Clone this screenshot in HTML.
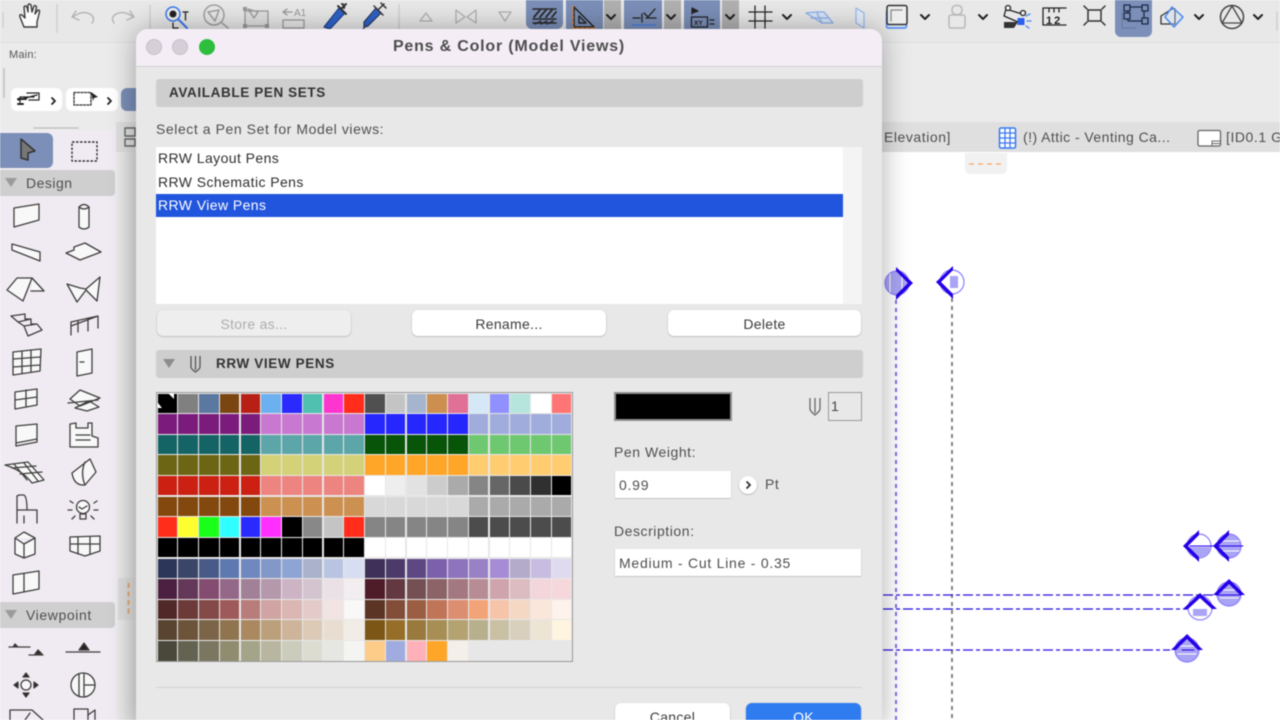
<!DOCTYPE html>
<html><head><meta charset="utf-8">
<style>
html,body{margin:0;padding:0;width:1280px;height:720px;overflow:hidden;background:#fff}
#r{position:relative;width:1280px;height:720px;overflow:hidden;font-family:"Liberation Sans",Arial,sans-serif;filter:blur(.45px);background:#fff}
#r div,#r span.a{position:absolute}
.t{white-space:nowrap;color:#4f4f4f;font-size:14px;letter-spacing:.55px;line-height:16px}
.h{white-space:nowrap;color:#333;font-weight:bold;font-size:13.5px;letter-spacing:.62px;line-height:16px}
.btn{background:#fff;border-radius:6px;box-shadow:0 .5px 1.5px rgba(0,0,0,.3);text-align:center;font-size:14px;color:#3c3c3c;line-height:28px;letter-spacing:.3px}
.inp{background:#fff;box-shadow:0 .5px 1px rgba(0,0,0,.3);font-size:14px;color:#4f4f4f;line-height:28px;padding-left:4px;box-sizing:border-box;letter-spacing:.75px;white-space:nowrap}
#g{left:156px;top:392px;width:417px;height:270px;box-sizing:border-box;border:1px solid #999;background:#e7e7e7;display:grid;grid-template-columns:repeat(20,1fr);grid-template-rows:repeat(13,1fr);gap:1.2px;padding:.5px}
#g i{display:block}
svg{position:absolute;left:0;top:0}
</style></head><body><div id="r">

<!-- app chrome -->
<div style="left:0;top:0;width:1280px;height:42px;background:#e8e8e8"></div>
<div style="left:0;top:42px;width:1280px;height:80px;background:#ebebeb;border-top:1px solid #e0e0e0"></div>
<div style="left:0;top:122px;width:1280px;height:30px;background:#dfdfdf"></div>
<div style="left:0;top:122px;width:116px;height:10px;background:#ebebeb"></div>
<div style="left:0;top:130px;width:116px;height:590px;background:#f0ebf2"></div>
<div style="left:116px;top:122px;width:20px;height:598px;background:linear-gradient(90deg,#ececec,#dedede)"></div>
<div style="left:118px;top:578px;width:18px;height:42px;background:#dcdcdc"></div>
<div style="left:116px;top:122px;width:20px;height:30px;background:#dedede"></div>

<div class="t" style="left:9px;top:47px;font-size:11px;letter-spacing:.2px;color:#555">Main:</div>
<div style="left:3px;top:68px;width:2px;height:30px;background:#c8c8c8"></div>
<div style="left:11px;top:88px;width:51px;height:23px;background:#fff;border-radius:6px"></div>
<div style="left:66px;top:88px;width:52px;height:23px;background:#fff;border-radius:6px"></div>
<div style="left:121px;top:88px;width:20px;height:23px;background:#7b8fb8;border-radius:6px"></div>

<!-- blue toolbar buttons -->
<div style="left:526px;top:0;width:37px;height:29px;background:#7b8fb8;border-radius:0 0 6px 6px"></div>
<div style="left:566px;top:0;width:37px;height:29px;background:#7b8fb8"></div>
<div style="left:604px;top:0;width:17px;height:29px;background:#b0b0b0"></div>
<div style="left:624px;top:0;width:38px;height:29px;background:#7b8fb8"></div>
<div style="left:664px;top:0;width:17px;height:29px;background:#b0b0b0"></div>
<div style="left:684px;top:0;width:36px;height:29px;background:#7b8fb8"></div>
<div style="left:722px;top:0;width:17px;height:29px;background:#b0b0b0"></div>
<div style="left:1115px;top:0;width:37px;height:37px;background:#7b8fb8;border-radius:0 0 6px 6px"></div>
<div style="left:0;top:133px;width:53px;height:35px;background:#7b8fb8;border-radius:0 6px 6px 0"></div>
<div style="left:0;top:170px;width:115px;height:26px;background:#cfcfcf;border-radius:0 4px 4px 0"></div>
<div style="left:0;top:602px;width:115px;height:26px;background:#cfcfcf;border-radius:0 4px 4px 0"></div>
<div class="t" style="left:26px;top:175px;font-size:14px;letter-spacing:.5px">Design</div>
<div class="t" style="left:26px;top:607px;font-size:14px;letter-spacing:.6px">Viewpoint</div>

<!-- tabs -->
<div class="t" style="left:884px;top:129px">Elevation]</div>
<div class="t" style="left:1023px;top:129px;letter-spacing:.45px">(!) Attic - Venting Ca...</div>
<div class="t" style="left:1226px;top:129px">[ID0.1 GI</div>
<div style="left:965px;top:153px;width:42px;height:21px;background:#f1f1f1;border-radius:0 0 5px 5px"></div>

<svg width="1280" height="720" viewBox="0 0 1280 720" fill="none" stroke="#444" stroke-width="1.3" stroke-linejoin="round" stroke-linecap="round">
<!-- canvas markers -->
<g stroke-width="1.8" stroke-linecap="butt">
<path d="M896 300V720" stroke="#7a5fe6" stroke-dasharray="4 4"/>
<path d="M952 298V720" stroke="#777" stroke-dasharray="4 4"/>
<path d="M883 595H1215" stroke="#2a10e0" stroke-width="1.2" stroke-dasharray="10 3 4 3"/>
<path d="M883 609H1190" stroke="#2010e0" stroke-width="1.2" stroke-dasharray="10 3 4 3"/>
<path d="M883 650H1170" stroke="#2a10e0" stroke-width="1.2" stroke-dasharray="10 3 4 3"/>
</g>
<g stroke="#8a80ff" stroke-width="1.2">
<circle cx="897" cy="283" r="12" fill="#a9a4f4"/>
<circle cx="952" cy="282" r="12" fill="#fff"/>
<path d="M950 276h8v12h-8z" fill="#a9a4f4" stroke="none"/>
<circle cx="1199" cy="546" r="12" fill="#fff"/><path d="M1188 547h22a11 11 0 0 1-22 0z" fill="#a9a4f4" stroke="none"/>
<circle cx="1229" cy="546" r="12" fill="#a9a4f4"/>
<circle cx="1229" cy="594" r="12" fill="#a9a4f4"/>
<circle cx="1200" cy="608" r="12" fill="#fff"/><path d="M1193 609h14v7h-14z" fill="#a9a4f4" stroke="none"/>
<circle cx="1187" cy="650" r="12" fill="#a9a4f4"/>
</g>
<g stroke="#fff" stroke-width="1"><path d="M1220 590H1238M1220 598H1238M1178 646H1196M1178 654H1196M1219 541H1239M890 274V292M902 274V292M1220 551H1239"/></g>
<g fill="#2500e8" stroke="none">
<path d="M896 267L913 283L896 300L896 295L908 283L896 271z"/>
<path d="M953 266L936 282L953 299L953 294L941 282L953 270z"/>
<path d="M1199 530L1183 546L1199 562L1199 557L1188 546L1199 535z"/><path d="M1229 530L1213 546L1229 562L1229 557L1218 546L1229 535z"/>
<path d="M1229 579L1245 595H1240L1229 584L1218 595H1213z"/><path d="M1200 593L1217 609H1212L1200 598L1188 609H1183z"/><path d="M1187 634L1203 650H1198L1187 639L1176 650H1171z"/>
</g>
<path d="M1190 546H1243M1216 595H1241M1182 650H1194" stroke="#2500e8" stroke-width="1"/>

<!-- orange dashes -->
<path d="M969 164H1003" stroke="#f2a868" stroke-width="1.3" stroke-dasharray="5 4" stroke-linecap="butt"/>
<path d="M128.500 583V617" stroke="#e8a870" stroke-width="2" stroke-dasharray="5 3.500" stroke-linecap="butt"/>

<!-- tab icons -->
<rect x="999.500" y="128" width="16" height="20" rx="1.500" fill="#fff" stroke="#3a78f0" stroke-width="1.500"/>
<path d="M1005 128V148M1010 128V148M1000 133H1015M1000 138H1015M1000 143H1015" stroke="#3a78f0" stroke-width="1.300"/>
<rect x="1198" y="130.500" width="22.500" height="15.500" rx="1.500" fill="#fff" stroke="#666" stroke-width="1.300"/>
<path d="M1212 146V141H1220M1213 143.500H1220" stroke="#666" stroke-width="1"/>
<path d="M125 128H135V136H125zM125 139H135V146H125z" stroke="#666" stroke-width="1.400"/>
<path d="M34 128H78" stroke="#bbb"/>

<!-- toolbar separators -->
<path d="M3 13V27M57 5V32M150 5V32M399 5V32M1277 12V30" stroke="#d0d0d0" stroke-width="1.500"/>
<!-- hand -->
<path d="M24 27L20 17Q19 14 22 15L25 18L24 7Q25 5 27 7L28 12V5Q29 3 31 5L32 12L34 6Q36 5 36.500 7L35 14L38 10Q40 10 39.500 12L37 22L37 27z" stroke="#3a3a3a" fill="#fbfbfb" stroke-width="1.400"/>
<!-- undo redo -->
<path d="M76 11L72 17L79 20M73 17Q82 10 90 14Q96 18 92 23" stroke="#b4b4b4" stroke-width="1.400"/>
<path d="M130 11L134 17L127 20M133 17Q124 10 116 14Q110 18 114 23" stroke="#b4b4b4" stroke-width="1.400"/>
<!-- find & select -->
<circle cx="173" cy="14" r="7" stroke="#3a78f0" stroke-width="1.500" fill="#eee"/><circle cx="173" cy="14" r="3.500" fill="#222" stroke="none"/>
<path d="M178 19L187 28" stroke="#3a78f0" stroke-width="2"/>
<path d="M183 12H188M185.500 12V20M173 23V28H178" stroke="#222"/>
<circle cx="214" cy="15" r="10" stroke="#a0a0a0" stroke-width="1.500"/><path d="M208 12L219 10L215 21zM222 23L228 28" stroke="#a0a0a0" stroke-width="1.500"/>
<path d="M245 26V11H268V26zM248 9L258 12L254 18z" stroke="#9a9a9a" stroke-width="1.300" fill="#e0e0e0"/>
<rect x="243" y="7" width="4" height="4" fill="#999" stroke="none"/><rect x="265" y="24" width="4" height="4" fill="#999" stroke="none"/><rect x="243" y="24" width="4" height="4" fill="#999" stroke="none"/>
<path d="M283 20H304V28H283zM283 12L287 9M283 12L287 15M283 12H292" stroke="#9a9a9a" stroke-width="1.300"/>
<text x="294" y="16" font-family="Liberation Sans" font-size="10" fill="#999" stroke="none">A1</text>
<!-- eyedropper -->
<path d="M324 27L330 29L345 13L339 8z" fill="#2f62c8" stroke="#1e3f88" stroke-width="1.200"/><path d="M338 6L346 14M342 4Q345 5 344 8M342 8L346 4" stroke="#333" stroke-width="2"/>
<path d="M364 27L368 26L381 13L376 8L364 22zM363 29L366 26" fill="#2f62c8" stroke="#2a3a60" stroke-width="1.200"/><path d="M374 6L383 15M379 9L384 4M381 3L386 8" stroke="#333" stroke-width="1.500"/>
<!-- triangles -->
<path d="M420 21H432L426 13z" stroke="#b0b0b0" stroke-width="1.300"/>
<path d="M456 10V23L465 17zM476 10V23L467 17z" stroke="#b0b0b0" stroke-width="1.300"/>
<path d="M499 12H511L505 21z" stroke="#b0b0b0" stroke-width="1.300"/>
<!-- layer hatch -->
<path d="M533 9H556M533 19H556M533 23H556" stroke="#2a2a2a" stroke-width="1.500"/>
<path d="M534 17L540 10M540 17L546 10M546 17L552 10M552 17L556 12" stroke="#2a2a2a" stroke-width="1.800"/>
<path d="M535 24L541 21M541 24L547 21M547 24L553 21" stroke="#2a2a2a" stroke-width="1.300"/>
<!-- ruler triangle -->
<path d="M574 7L594 27H574zM579 16L586 23H579z" stroke="#222" stroke-width="1.400"/>
<path d="M573 6V28H596" stroke="#e8822c" stroke-width="1.300" stroke-dasharray="3 2"/>
<path d="M607 15L611 19L615 15M667 15L671 19L675 15M726 15L730 19L734 15M783 15L787 19L791 15" stroke="#222" stroke-width="2"/>
<path d="M633 18H640M646 18H656M642 14V22M644 13L648 17L655 9" stroke="#222" stroke-width="1.300"/>
<path d="M633 25H655" stroke="#3a78f0" stroke-width="1.200" stroke-dasharray="2.500 1.500"/>
<path d="M692 8V14M692 8L698 11L692 13" stroke="#222" fill="#222" stroke-width="1.200"/>
<rect x="691.500" y="17" width="16" height="10" stroke="#222" stroke-width="1.300"/>
<path d="M710 20H714M710 24H714" stroke="#222" stroke-width="1.200"/>
<text x="694" y="25" font-family="Liberation Sans" font-size="6.500" font-weight="bold" fill="#222" stroke="none">XY</text>
<!-- grid snap -->
<path d="M749 12H772M749 21H772M755 6V28M765 6V28" stroke="#222" stroke-width="1.300" stroke-dasharray="4 1"/>
<path d="M816 12H824L833 23H822L806 13z" stroke="#8ab0ee" fill="#d8e4f6" stroke-width="1.300"/><path d="M811 18H828M817 13L822 23" stroke="#8ab0ee"/>
<path d="M856 8L864 13V28L856 23z" stroke="#9ab8ee" stroke-width="1.200" fill="#e4ecf8"/>
<!-- right toolbar -->
<rect x="886.500" y="10" width="20" height="18" rx="2" stroke="#4a88ee" stroke-width="1.500" fill="#d8e4f6"/>
<rect x="887" y="5.500" width="20" height="19" rx="2" stroke="#333" stroke-width="1.500" fill="#eee"/><path d="M891 21V10H902" stroke="#888"/>
<path d="M921 15L925 19L929 15M979 15L983 19L987 15M1195 15L1199 19L1203 15M1254 15L1258 19L1262 15" stroke="#222" stroke-width="2"/>
<rect x="949" y="15" width="16" height="13" rx="2" stroke="#b8b8b8" stroke-width="1.500"/><rect x="952" y="5.500" width="10" height="9" rx="4" stroke="#b8b8b8" stroke-width="1.500"/>
<path d="M1006 9L1022 14M1006 9L1004 16L1018 22" stroke="#222" stroke-width="1.300"/><circle cx="1008" cy="8" r="2.500" fill="#eee" stroke="#222"/><circle cx="1023" cy="13" r="2.500" fill="#eee" stroke="#222"/>
<path d="M1004 22H1018L1014 28H1004z" fill="#333" stroke="none"/><rect x="1017.500" y="18" width="7" height="7" fill="#2a5ff0" stroke="none"/><path d="M1026 16L1030 14M1027 21H1031M1026 26L1029 28" stroke="#4a88ee"/>
<path d="M1043 8H1066M1043 25H1066M1043 8V25M1049 8V12M1054 8V12M1059 8V12" stroke="#222" stroke-width="1.300"/>
<text x="1046" y="24" font-family="Liberation Sans" font-size="11" font-weight="bold" letter-spacing="2" fill="#222" stroke="none">12</text>
<path d="M1088 10L1101 10L1101 21L1088 21zM1087 9L1084 6M1102 9L1105 6M1087 22L1084 25M1102 22L1105 25" stroke="#333" stroke-width="1.500"/>
<rect x="1128" y="7" width="16" height="14" stroke="#1e2a44" stroke-width="1.300"/>
<path d="M1124 13H1130V19H1124zM1142 5H1148V11H1142zM1124 5H1130V11H1124zM1142 18H1148V24H1142z" fill="#7b8fb8" stroke="#1e2a44" stroke-width="1.300"/>
<path d="M1122 12V28H1136" stroke="#69789a" stroke-width="1"/>
<path d="M1161 24V16L1172 9H1175V24z" stroke="#333" stroke-width="1.300"/>
<path d="M1172 7L1183 17L1174 27L1165 17z" stroke="#4a88ee" stroke-width="1.500" fill="rgba(200,220,250,.35)"/>
<circle cx="1232" cy="17" r="11.500" stroke="#444" stroke-width="1.500"/><path d="M1232 6L1242 23H1222z" stroke="#444" stroke-width="1.300"/>

<!-- pills -->
<path d="M18 100L37 95M20 97H35M20 97V104M27 93H39V100H29" stroke="#222" stroke-width="1.300" stroke-dasharray="2 1"/><path d="M18 99H26M18 104H23" stroke="#222" stroke-width="2"/>
<path d="M52 98L55 101L52 104M108 98L111 101L108 104" stroke="#222" stroke-width="1.800"/>
<rect x="74" y="92.500" width="17" height="12.500" stroke="#333" stroke-dasharray="2 1.500"/><path d="M91 92L98 97L94 98L93 101z" fill="#222" stroke="none"/>

<!-- select tool & marquee -->
<path d="M21 139L35 151L28 153L28 160L21 158z" fill="#777" stroke="#333" stroke-width="1.500"/>
<rect x="72" y="142" width="25" height="19" stroke="#333" stroke-width="1.400" stroke-dasharray="2.500 1.500" stroke-linecap="butt"/>
<path d="M5 178L17 178L11 187z" fill="#9a9a9a" stroke="none"/><path d="M5 610L17 610L11 619z" fill="#9a9a9a" stroke="none"/>

<!-- palette icons -->
<g stroke="#3e3e3e" fill="#f8f8f8" stroke-width="1.300">
<path d="M14 208L39 204V220L14 227z"/>
<path d="M79 207Q84 202 89 207V227Q84 231 79 227z M79 207Q84 211 89 207"/>
<path d="M12 244L40 252V261L12 250zM12 244V248"/>
<path d="M66 253L74 250L74 247L85 243L101 252L80 260z"/>
<path d="M7 290L17 278H32L23 301zM32 278L44 291L31 291"/>
<path d="M67 284L77 302L86 290L97 301L100 277L86 289L80 288z"/>
<path d="M11 316L25 314V319L31 319V324L37 324L42 330L28 336L24 326L18 322L11 316M18 322L31 319M24 326L37 324M28 336" fill="none"/>
<path d="M71 335V326L98 316V328M71 326V322L98 316M78 321V332M88 318V331" fill="none"/>
<path d="M13 352L41 349L40 371L13 375zM13 359L40 357M13 367L40 365M22 351V373M31 350V372"/>
<path d="M77 352L92 349V373L77 376zM80 362H84"/>
<path d="M15 392L37 389V405L15 409zM15 400L37 397M26 390V407"/>
<path d="M70 399L80 390L100 398L80 406zM68 403L98 400M75 408L89 401L99 407L87 411z"/>
<path d="M16 426L37 424V442L16 446zM16 443L37 439"/>
<path d="M70 424L76 423V428H88V423L92 423V436L98 438V447H70zM76 435H90M76 440H90"/>
<path d="M5 465L28 462L44 480L32 483Q22 470 5 465zM14 464L27 480M24 463L38 481M12 468L36 466M20 474L42 472"/>
<path d="M72 473L90 459L96 472L85 485Q74 486 72 473zM85 462Q80 473 85 485" />
<path d="M19 495H24Q27 497 27 510H37V523M17 523V496L19 495M17 510H27M24 516V523" fill="none"/>
<circle cx="83" cy="507" r="6.500"/><path d="M80 514H86V519H80zM73 503L70 501M94 503L97 501M72 510H68M94 510H98M75 516L72 519M91 516L94 519M79 507L82 509L87 506" fill="none"/>
<path d="M15 538L24 532L35 538V554L24 558L15 554zM15 538L24 544L35 538M24 544V558"/>
<path d="M70 537L100 536V551L85 556L70 551zM70 544H100M78 537V554M90 537V554"/>
<path d="M13 575L39 571V589L13 594zM24 574V591"/>
<path d="M9 647H30M29 655H43M15 644L13 647H18zM38 650L35 654H42z" fill="#222"/>
<path d="M66 652H100M84 643L79 650H89z" fill="#222"/>
<circle cx="26" cy="685" r="5"/><path d="M26 673L23 677H29zM26 697L23 693H29zM14 685L18 682V688zM38 685L34 682V688z" fill="#222"/>
<circle cx="83" cy="685" r="12"/><path d="M79 674V696M84 674V696M84 685H95"/>
<path d="M10 720V710H32L43 720M25 720L30 713" fill="none"/>
<path d="M74 720V709H88V720M88 715L95 710V720" fill="none"/>
</g>
</svg>

<!-- dialog -->
<div style="left:136px;top:29px;width:746px;height:700px;background:#e8e8e8;border-radius:12px 12px 0 0;box-shadow:0 0 28px rgba(0,0,0,.32);overflow:hidden">
  <div style="left:0;top:0;width:746px;height:37px;background:#f4edf6;border-bottom:1px solid #cfcfcf"></div>
</div>
<div style="left:146px;top:39px;width:16px;height:16px;border-radius:50%;background:#d5cfd8;box-shadow:inset 0 0 0 1px #c8c2cb"></div>
<div style="left:172px;top:39px;width:16px;height:16px;border-radius:50%;background:#d5cfd8;box-shadow:inset 0 0 0 1px #c8c2cb"></div>
<div style="left:199px;top:39px;width:16px;height:16px;border-radius:50%;background:#2dbe3e"></div>
<div class="h" style="left:136px;width:746px;top:39px;text-align:center;color:#4d4d4d;font-size:16px;letter-spacing:.8px">Pens &amp; Color (Model Views)</div>

<div style="left:156px;top:79px;width:707px;height:28px;background:#cecece;border-radius:3px"></div>
<div class="h" style="left:169px;top:85px">AVAILABLE PEN SETS</div>
<div class="t" style="left:156px;top:121px;letter-spacing:.57px">Select a Pen Set for Model views:</div>

<div style="left:156px;top:147px;width:706px;height:157px;background:#fff"></div>
<div style="left:843px;top:147px;width:19px;height:157px;background:#f4f4f4"></div>
<div class="t" style="left:158px;top:150px;color:#2e2e2e;letter-spacing:.42px">RRW Layout Pens</div>
<div class="t" style="left:158px;top:174px;color:#2e2e2e;letter-spacing:.42px">RRW Schematic Pens</div>
<div style="left:156px;top:194px;width:687px;height:23px;background:#2155dd"></div>
<div class="t" style="left:158px;top:197px;color:#fff;letter-spacing:.42px">RRW View Pens</div>

<div class="btn" style="left:157px;top:310px;width:194px;height:26px;background:#eeeeee;color:#adadad">Store as...</div>
<div class="btn" style="left:412px;top:310px;width:194px;height:26px">Rename...</div>
<div class="btn" style="left:668px;top:310px;width:193px;height:26px">Delete</div>

<div style="left:156px;top:350px;width:707px;height:28px;background:#cecece;border-radius:3px"></div>
<div style="left:163px;top:359px;width:0;height:0;border-left:6px solid transparent;border-right:6px solid transparent;border-top:9px solid #8c8c8c"></div>
<svg width="1280" height="720" viewBox="0 0 1280 720" fill="none" stroke="#555" stroke-width="1.300">
<path d="M191 356V367Q191 369 195.500 372Q200 369 200 367V356M195.500 356V370"/>
<path d="M810 398V409Q810 411 815 415Q820 411 820 409V398M815 398V413" stroke="#666"/>
</svg>
<div class="h" style="left:216px;top:356px">RRW VIEW PENS</div>

<div id="g">
<i style="background:#000"></i><i style="background:#808080"></i><i style="background:#5a78a0"></i><i style="background:#7a4510"></i><i style="background:#b82015"></i><i style="background:#6cb0f0"></i><i style="background:#2a2aff"></i><i style="background:#50c0b0"></i><i style="background:#ff35d0"></i><i style="background:#ff2d1a"></i><i style="background:#505050"></i><i style="background:#c4c4c4"></i><i style="background:#a5b5cd"></i><i style="background:#cc8f50"></i><i style="background:#e07095"></i><i style="background:#d5e8f8"></i><i style="background:#9090ff"></i><i style="background:#b5e5dc"></i><i style="background:#fff"></i><i style="background:#ff7575"></i>
<i style="background:#7b1c7d"></i><i style="background:#7b1c7d"></i><i style="background:#7b1c7d"></i><i style="background:#7b1c7d"></i><i style="background:#7b1c7d"></i><i style="background:#c878d0"></i><i style="background:#c878d0"></i><i style="background:#c878d0"></i><i style="background:#c878d0"></i><i style="background:#c878d0"></i><i style="background:#2626ff"></i><i style="background:#2626ff"></i><i style="background:#2626ff"></i><i style="background:#2626ff"></i><i style="background:#2626ff"></i><i style="background:#a0acdc"></i><i style="background:#a0acdc"></i><i style="background:#a0acdc"></i><i style="background:#a0acdc"></i><i style="background:#a0acdc"></i>
<i style="background:#146466"></i><i style="background:#146466"></i><i style="background:#146466"></i><i style="background:#146466"></i><i style="background:#146466"></i><i style="background:#5ca6aa"></i><i style="background:#5ca6aa"></i><i style="background:#5ca6aa"></i><i style="background:#5ca6aa"></i><i style="background:#5ca6aa"></i><i style="background:#085408"></i><i style="background:#085408"></i><i style="background:#085408"></i><i style="background:#085408"></i><i style="background:#085408"></i><i style="background:#6ec870"></i><i style="background:#6ec870"></i><i style="background:#6ec870"></i><i style="background:#6ec870"></i><i style="background:#6ec870"></i>
<i style="background:#6c6614"></i><i style="background:#6c6614"></i><i style="background:#6c6614"></i><i style="background:#6c6614"></i><i style="background:#6c6614"></i><i style="background:#d4d278"></i><i style="background:#d4d278"></i><i style="background:#d4d278"></i><i style="background:#d4d278"></i><i style="background:#d4d278"></i><i style="background:#ffa628"></i><i style="background:#ffa628"></i><i style="background:#ffa628"></i><i style="background:#ffa628"></i><i style="background:#ffa628"></i><i style="background:#ffcc70"></i><i style="background:#ffcc70"></i><i style="background:#ffcc70"></i><i style="background:#ffcc70"></i><i style="background:#ffcc70"></i>
<i style="background:#cc2112"></i><i style="background:#cc2112"></i><i style="background:#cc2112"></i><i style="background:#cc2112"></i><i style="background:#cc2112"></i><i style="background:#ee8480"></i><i style="background:#ee8480"></i><i style="background:#ee8480"></i><i style="background:#ee8480"></i><i style="background:#ee8480"></i><i style="background:#fff"></i><i style="background:#eee"></i><i style="background:#e2e2e2"></i><i style="background:#ccc"></i><i style="background:#aaa"></i><i style="background:#858585"></i><i style="background:#666"></i><i style="background:#4a4a4a"></i><i style="background:#303030"></i><i style="background:#000"></i>
<i style="background:#82480e"></i><i style="background:#82480e"></i><i style="background:#82480e"></i><i style="background:#82480e"></i><i style="background:#82480e"></i><i style="background:#cc9050"></i><i style="background:#cc9050"></i><i style="background:#cc9050"></i><i style="background:#cc9050"></i><i style="background:#cc9050"></i><i style="background:#d8d8d8"></i><i style="background:#d8d8d8"></i><i style="background:#d8d8d8"></i><i style="background:#d8d8d8"></i><i style="background:#d8d8d8"></i><i style="background:#aaa"></i><i style="background:#aaa"></i><i style="background:#aaa"></i><i style="background:#aaa"></i><i style="background:#aaa"></i>
<i style="background:#ff2d1a"></i><i style="background:#ffff30"></i><i style="background:#1aff1a"></i><i style="background:#30ffff"></i><i style="background:#2a2aff"></i><i style="background:#ff30ff"></i><i style="background:#000"></i><i style="background:#888"></i><i style="background:#c4c4c4"></i><i style="background:#ff2d1a"></i><i style="background:#858585"></i><i style="background:#858585"></i><i style="background:#858585"></i><i style="background:#858585"></i><i style="background:#858585"></i><i style="background:#4c4c4c"></i><i style="background:#4c4c4c"></i><i style="background:#4c4c4c"></i><i style="background:#4c4c4c"></i><i style="background:#4c4c4c"></i>
<i style="background:#000"></i><i style="background:#000"></i><i style="background:#000"></i><i style="background:#000"></i><i style="background:#000"></i><i style="background:#000"></i><i style="background:#000"></i><i style="background:#000"></i><i style="background:#000"></i><i style="background:#000"></i><i style="background:#fff"></i><i style="background:#fff"></i><i style="background:#fff"></i><i style="background:#fff"></i><i style="background:#fff"></i><i style="background:#fff"></i><i style="background:#fff"></i><i style="background:#fff"></i><i style="background:#fff"></i><i style="background:#fff"></i>
<i style="background:#2c3658"></i><i style="background:#3a4568"></i><i style="background:#4a5a88"></i><i style="background:#5e78b0"></i><i style="background:#7088c0"></i><i style="background:#8298c8"></i><i style="background:#8ea4d4"></i><i style="background:#aab2cc"></i><i style="background:#b8c4e2"></i><i style="background:#d8def2"></i><i style="background:#3e3058"></i><i style="background:#4c3b6a"></i><i style="background:#5e4884"></i><i style="background:#7c60ac"></i><i style="background:#8e74bc"></i><i style="background:#9a80c4"></i><i style="background:#a68cd4"></i><i style="background:#b4aaca"></i><i style="background:#c8bce0"></i><i style="background:#e0daf0"></i>
<i style="background:#4c2040"></i><i style="background:#643858"></i><i style="background:#844c70"></i><i style="background:#946888"></i><i style="background:#a28098"></i><i style="background:#b498ac"></i><i style="background:#ccb4c4"></i><i style="background:#d4c4d0"></i><i style="background:#eae0e6"></i><i style="background:#f2eef0"></i><i style="background:#4e1c28"></i><i style="background:#643840"></i><i style="background:#745054"></i><i style="background:#8c6468"></i><i style="background:#a47880"></i><i style="background:#b88c94"></i><i style="background:#d0a4ac"></i><i style="background:#dcbcc0"></i><i style="background:#f2d6dc"></i><i style="background:#f6d8dc"></i>
<i style="background:#502828"></i><i style="background:#6c3a38"></i><i style="background:#844a48"></i><i style="background:#9e5a58"></i><i style="background:#b87c7a"></i><i style="background:#d0a4a2"></i><i style="background:#dcb6b2"></i><i style="background:#e4cac8"></i><i style="background:#f2e4e2"></i><i style="background:#faf8f6"></i><i style="background:#5c3426"></i><i style="background:#824e38"></i><i style="background:#9c5e42"></i><i style="background:#c07458"></i><i style="background:#dc8e70"></i><i style="background:#f2a478"></i><i style="background:#f6c4a8"></i><i style="background:#f4d8c4"></i><i style="background:#fae6da"></i><i style="background:#fdf2ec"></i>
<i style="background:#584430"></i><i style="background:#6c543a"></i><i style="background:#7c6448"></i><i style="background:#907450"></i><i style="background:#aa8860"></i><i style="background:#bca07c"></i><i style="background:#ceb49a"></i><i style="background:#dccab6"></i><i style="background:#e8ddd0"></i><i style="background:#f2ece6"></i><i style="background:#7c5614"></i><i style="background:#966e28"></i><i style="background:#9a7a3c"></i><i style="background:#a68e54"></i><i style="background:#b4a270"></i><i style="background:#b8b08c"></i><i style="background:#cac0a4"></i><i style="background:#d8d0bc"></i><i style="background:#eee4d4"></i><i style="background:#fef4e0"></i>
<i style="background:#4a483a"></i><i style="background:#646250"></i><i style="background:#7a7660"></i><i style="background:#908c70"></i><i style="background:#a4a488"></i><i style="background:#b8b6a0"></i><i style="background:#ccccbc"></i><i style="background:#dcdcd0"></i><i style="background:#e6e6e2"></i><i style="background:#f4f4f2"></i><i style="background:#fccc88"></i><i style="background:#a0ace0"></i><i style="background:#ffb0b8"></i><i style="background:#ffa628"></i><i style="background:#f4efe8"></i>
</div>
<svg width="1280" height="720" viewBox="0 0 1280 720" stroke="none"><path d="M168 393H174V399zM158 403L162 408H158z" fill="#fff"/></svg>

<div style="left:614px;top:392px;width:118px;height:29px;box-sizing:border-box;background:#000;border:2px solid #8f8f8f"></div>
<div style="left:828px;top:392px;width:34px;height:29px;box-sizing:border-box;border:1.500px solid #999"></div>
<div class="t" style="left:831px;top:398px;color:#444">1</div>
<div class="t" style="left:614px;top:444px">Pen Weight:</div>
<div class="inp" style="left:615px;top:471px;width:116px;height:27px">0.99</div>
<div style="left:739px;top:476px;width:18px;height:18px;border-radius:50%;background:#fff;box-shadow:0 .5px 1.500px rgba(0,0,0,.35)"></div>
<svg width="1280" height="720" viewBox="0 0 1280 720" fill="none"><path d="M746.500 481.500L750 485L746.500 488.500" stroke="#333" stroke-width="1.800"/></svg>
<div class="t" style="left:765px;top:476px">Pt</div>
<div class="t" style="left:614px;top:523px">Description:</div>
<div class="inp" style="left:615px;top:549px;width:246px;height:27px">Medium - Cut Line - 0.35</div>

<div style="left:156px;top:687px;width:706px;height:1px;background:#d2d2d2"></div>
<div class="btn" style="left:615px;top:703px;width:115px;height:26px">Cancel</div>
<div class="btn" style="left:746px;top:703px;width:115px;height:26px;background:#2f7bf0;color:#fff">OK</div>

</div></body></html>
